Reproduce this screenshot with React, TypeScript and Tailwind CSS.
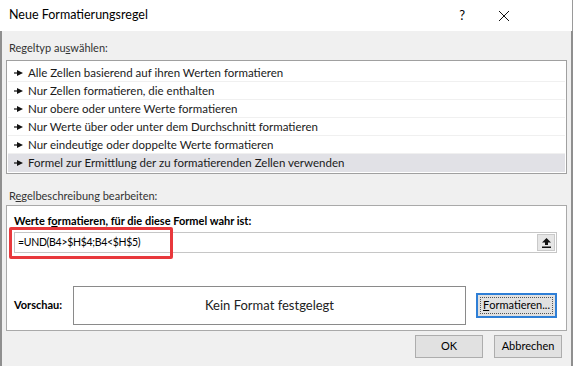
import React from "react";

const rules = [
  "Alle Zellen basierend auf ihren Werten formatieren",
  "Nur Zellen formatieren, die enthalten",
  "Nur obere oder untere Werte formatieren",
  "Nur Werte über oder unter dem Durchschnitt formatieren",
  "Nur eindeutige oder doppelte Werte formatieren",
  "Formel zur Ermittlung der zu formatierenden Zellen verwenden",
];

const Pointer = () => (
  <svg width="9" height="6" viewBox="0 0 9 6" className="shrink-0">
    <rect x="0" y="2.4" width="4" height="1.2" fill="#111" />
    <polygon points="3,0 9,3 3,6" fill="#111" />
  </svg>
);

const App: React.FC = () => {
  return (
    <div
      className="w-[573px] h-[366px] bg-[#f0f0f0] flex flex-col text-[#1a1a1a] overflow-hidden"
      style={{ fontFamily: '"Segoe UI", Lato, "Noto Sans", sans-serif' }}
    >
      {/* Title bar */}
      <div className="h-[31px] bg-white flex items-center shrink-0 border-r border-[#9a9a9a]">
        <span className="ml-[9px] text-[12.5px] text-black">Neue Formatierungsregel</span>
        <span className="ml-auto mr-[33px] text-[13px] text-black">?</span>
        <svg width="12" height="12" viewBox="0 0 12 12" className="mr-[62px]">
          <path d="M1 1 L11 11 M11 1 L1 11" stroke="#111" strokeWidth="1" />
        </svg>
      </div>

      <div className="flex-1 flex flex-col border-l-2 border-r-2 border-[#8f8f8f] px-[4px]">
        {/* Rule type */}
        <div className="mt-[10px] text-[11px] text-[#333] leading-[14px] ml-[3px]">
          Regeltyp au<span className="underline">s</span>wählen:
        </div>
        <div className="mt-[5px] border border-[#a0a0a0] bg-white px-[1px] py-[3px] h-[114px]">
          {rules.map((r, i) => (
            <div
              key={r}
              className={`h-[18px] flex items-center gap-[5px] pl-[6px] text-[11.5px] border-b ${
                i === rules.length - 1 ? "bg-[#e1e1e6] border-transparent" : "border-[#f0f0f0]"
              }`}
            >
              <Pointer />
              <span>{r}</span>
            </div>
          ))}
        </div>

        {/* Rule description */}
        <div className="mt-[15px] text-[11px] text-[#333] leading-[14px] ml-[3px]">
          R<span className="underline">e</span>gelbeschreibung bearbeiten:
        </div>
        <div className="mt-[2px] border border-[#a9a9a9] bg-white h-[126px] flex flex-col px-[7px]">
          <div className="mt-[8px] text-[11px] font-bold text-black leading-[14px]">
            Werte f<span className="underline">o</span>rmatieren, für die diese Formel wahr ist:
          </div>
          <div className="relative mt-[4px] mr-[2px] h-[21px] border border-[#c6c6c6] flex items-center">
            <span className="ml-[3px] text-[10.5px] tracking-[-0.3px] text-black">=UND(B4&gt;$H$4;B4&lt;$H$5)</span>
            <div className="ml-auto mr-[1px] w-[18px] h-[17px] bg-[#e6e6e6] border border-[#c9c9c9] flex items-center justify-center">
              <svg width="9" height="10" viewBox="0 0 9 10">
                <polygon points="4.5,0 9,4.5 6,4.5 6,7 3,7 3,4.5 0,4.5" fill="#111" />
                <rect x="0" y="8.5" width="9" height="1.5" fill="#111" />
              </svg>
            </div>
            {/* red highlight */}
            <div className="absolute left-[-6px] top-[-6px] w-[164px] h-[32px] border-[3px] border-[#e8383c] rounded-[2px]" />
          </div>

          <div className="mt-[33px] flex items-center">
            <span className="text-[11px] font-bold text-black w-[59px]">Vorschau:</span>
            <div className="w-[393px] h-[39px] border border-[#8a8a8a] flex items-center justify-center text-[13px] text-[#222]">
              Kein Format festgelegt
            </div>
            <div className="ml-[10px] w-[81px] h-[25px] border-2 border-[#2f7fd6] bg-[#e1e1e1] p-[2px]">
              <div className="h-full border border-dotted border-[#555] flex items-center justify-center text-[11px] text-black">
                <span className="underline">F</span>ormatieren...
              </div>
            </div>
          </div>
        </div>

        {/* Footer buttons */}
        <div className="mt-[4px] flex justify-end gap-[11px] mr-[5px]">
          <div className="w-[68px] h-[23px] bg-[#e1e1e1] border border-[#adadad] flex items-center justify-center text-[11px] text-black">
            OK
          </div>
          <div className="w-[68px] h-[23px] bg-[#e1e1e1] border border-[#adadad] flex items-center justify-center text-[11px] text-black">
            Abbrechen
          </div>
        </div>
      </div>
    </div>
  );
};

export default App;
